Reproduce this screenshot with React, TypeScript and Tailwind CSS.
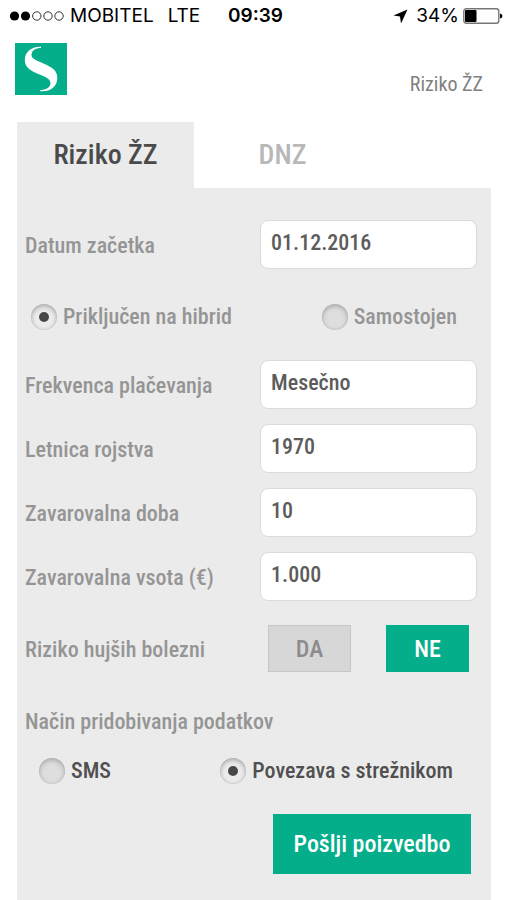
import React, { useState } from "react";

const StatusBar = () => {
  return (
    <div className="grid grid-cols-3 items-center h-8 pl-2 pr-1 text-black text-[19px] leading-6 font-[Inter,sans-serif]">
      <div className="flex items-center whitespace-nowrap">
        <svg width="56" height="12" viewBox="0 0 56 12" className="mr-[6px] shrink-0">
          <circle cx="6.5" cy="6" r="4.6" />
          <circle cx="17.5" cy="6" r="4.6" />
          <g fill="none" stroke="#333" strokeWidth="1">
            <circle cx="28.8" cy="6" r="4.2" />
            <circle cx="40" cy="6" r="4.2" />
            <circle cx="51" cy="6" r="4.2" />
          </g>
        </svg>
        <span className="mr-[14px]">MOBITEL</span>
        <span>LTE</span>
      </div>
      <p className="text-center font-semibold">09:39</p>
      <div className="flex items-center justify-end">
        <svg width="15" height="15" viewBox="0 0 15 15" className="mr-2">
          <path d="M14.5 0.5 L0.5 6.4 L7 7.6 L8 14.5 Z" />
        </svg>
        <span>34%</span>
        <svg width="40" height="16" viewBox="0 0 40 16" className="ml-1">
          <rect x="0.8" y="0.8" width="35" height="14.4" rx="2.5" fill="none" stroke="#777" strokeWidth="1.4" />
          <rect x="2" y="2" width="11.5" height="12" rx="1" />
          <path d="M37 5.5 Q39.5 6 39.5 8 Q39.5 10 37 10.5 Z" />
        </svg>
      </div>
    </div>
  );
};

const Logo = () => {
  return (
    <svg width="52" height="52" viewBox="0 0 52 52">
      <rect width="52" height="52" fill="#04ae8b" />
      <path
        d="M26 3.800 C16 3.500 9.800 9.500 9.800 17 C9.800 24.500 16 28 24 31.200 C31 34 35.500 36 35.500 40 C35.500 44.500 31 47 25 47.200 L25 48.300 C35.500 49 42.300 43.500 42.300 35 C42.300 27 37 24.500 29 20.800 C21.500 17.300 16.500 16 16.500 12 C16.500 7.500 20.500 5 26 5 Z"
        fill="white"
      />
    </svg>
  );
};

const Field = ({
  id,
  label,
  children,
}: {
  id: string;
  label: string;
  children: React.ReactNode;
}) => {
  return (
    <div className="grid grid-cols-[1fr_48%] items-center">
      <label htmlFor={id} className="pt-[2px]">
        {label}
      </label>
      {children}
    </div>
  );
};

const Radio = ({
  name,
  label,
  checked,
  onChange,
}: {
  name: string;
  label: string;
  checked: boolean;
  onChange: () => void;
}) => {
  return (
    <label className="flex items-center gap-[6px] whitespace-nowrap">
      <input
        type="radio"
        name={name}
        checked={checked}
        onChange={onChange}
        className="appearance-none grid place-items-center size-[26px] shrink-0 rounded-full bg-[#dedede] shadow-[inset_0_2px_5px_#a8a8a8,inset_0_0_2px_#c0c0c0] checked:bg-[#ececec] checked:before:block checked:before:size-[10px] checked:before:rounded-full checked:before:bg-[#484848]"
      />
      {label}
    </label>
  );
};

const inputStyle =
  "appearance-none w-full h-[49px] px-[10px] pb-1 rounded-lg border border-[#dadada] bg-white text-[#5c5c5c]";

const App = () => {
  const [tab, setTab] = useState("riziko");
  const [date, setDate] = useState("01.12.2016");
  const [type, setType] = useState("hibrid");
  const [frequency, setFrequency] = useState("Mesečno");
  const [year, setYear] = useState("1970");
  const [period, setPeriod] = useState("10");
  const [amount, setAmount] = useState("1.000");
  const [illness, setIllness] = useState(false);
  const [source, setSource] = useState("server");

  const tabStyle = (active: boolean) =>
    active
      ? "w-[177px] bg-[#ebebeb] text-[#4a4a4a]"
      : "w-[177px] text-[#b8b8b8]";

  const choiceStyle = (active: boolean) =>
    active
      ? "w-[83px] h-[47px] bg-[#04ae8b] text-white text-2xl"
      : "w-[83px] h-[47px] bg-[#d7d7d7] text-[#8c8c8c] text-2xl border border-[#c6c6c6]";

  return (
    <div className="min-h-screen flex flex-col bg-white">
      <StatusBar />
      <div className="flex flex-col grow font-['Roboto_Condensed',Roboto,sans-serif] font-medium text-[22px] leading-7 text-[#959595]">
        <header className="flex items-start justify-between h-[90px] pt-[11px] pl-[15px] pr-6">
          <Logo />
          <p className="pt-[27px] font-normal text-xl leading-7 text-[#808080]">
            Riziko ŽZ
          </p>
        </header>

        <main className="flex flex-col grow pl-[17px] pr-4">
          <div role="tablist" className="flex h-[66px] text-[28px]">
            <button
              role="tab"
              aria-selected={tab === "riziko"}
              onClick={() => setTab("riziko")}
              className={tabStyle(tab === "riziko")}
            >
              Riziko ŽZ
            </button>
            <button
              role="tab"
              aria-selected={tab === "dnz"}
              onClick={() => setTab("dnz")}
              className={tabStyle(tab === "dnz")}
            >
              DNZ
            </button>
          </div>

          <form
            onSubmit={(event) => event.preventDefault()}
            className="grow bg-[#ebebeb] pl-2 pr-[14px] pt-8 pb-6"
          >
            <Field id="date" label="Datum začetka">
              <input
                id="date"
                className={inputStyle}
                value={date}
                onChange={(event) => setDate(event.target.value)}
              />
            </Field>

            <div className="flex justify-between h-[91px] pt-1 pl-[6px] pr-5 items-center">
              <Radio
                name="type"
                label="Priključen na hibrid"
                checked={type === "hibrid"}
                onChange={() => setType("hibrid")}
              />
              <Radio
                name="type"
                label="Samostojen"
                checked={type === "samostojen"}
                onChange={() => setType("samostojen")}
              />
            </div>

            <div className="flex flex-col gap-[15px]">
              <Field id="frequency" label="Frekvenca plačevanja">
                <select
                  id="frequency"
                  className={inputStyle}
                  value={frequency}
                  onChange={(event) => setFrequency(event.target.value)}
                >
                  <option>Mesečno</option>
                </select>
              </Field>
              <Field id="year" label="Letnica rojstva">
                <input
                  id="year"
                  className={inputStyle}
                  value={year}
                  onChange={(event) => setYear(event.target.value)}
                />
              </Field>
              <Field id="period" label="Zavarovalna doba">
                <input
                  id="period"
                  className={inputStyle}
                  value={period}
                  onChange={(event) => setPeriod(event.target.value)}
                />
              </Field>
              <Field id="amount" label="Zavarovalna vsota (€)">
                <input
                  id="amount"
                  className={inputStyle}
                  value={amount}
                  onChange={(event) => setAmount(event.target.value)}
                />
              </Field>
            </div>

            <div className="flex items-center justify-between pt-6 pr-2">
              <p className="pt-[2px]">Riziko hujših bolezni</p>
              <div className="flex gap-[35px]">
                <button
                  type="button"
                  className={choiceStyle(illness)}
                  onClick={() => setIllness(true)}
                >
                  DA
                </button>
                <button
                  type="button"
                  className={choiceStyle(!illness)}
                  onClick={() => setIllness(false)}
                >
                  NE
                </button>
              </div>
            </div>

            <p className="pt-9">Način pridobivanja podatkov</p>

            <div className="flex justify-between h-[70px] items-center pl-[14px] pr-6 text-[#505050]">
              <Radio
                name="source"
                label="SMS"
                checked={source === "sms"}
                onChange={() => setSource("sms")}
              />
              <Radio
                name="source"
                label="Povezava s strežnikom"
                checked={source === "server"}
                onChange={() => setSource("server")}
              />
            </div>

            <div className="flex justify-end pt-2 pr-[6px]">
              <button className="w-[198px] h-[60px] bg-[#04ae8b] text-white text-2xl">
                Pošlji poizvedbo
              </button>
            </div>
          </form>
        </main>
      </div>
    </div>
  );
};

export default App;
